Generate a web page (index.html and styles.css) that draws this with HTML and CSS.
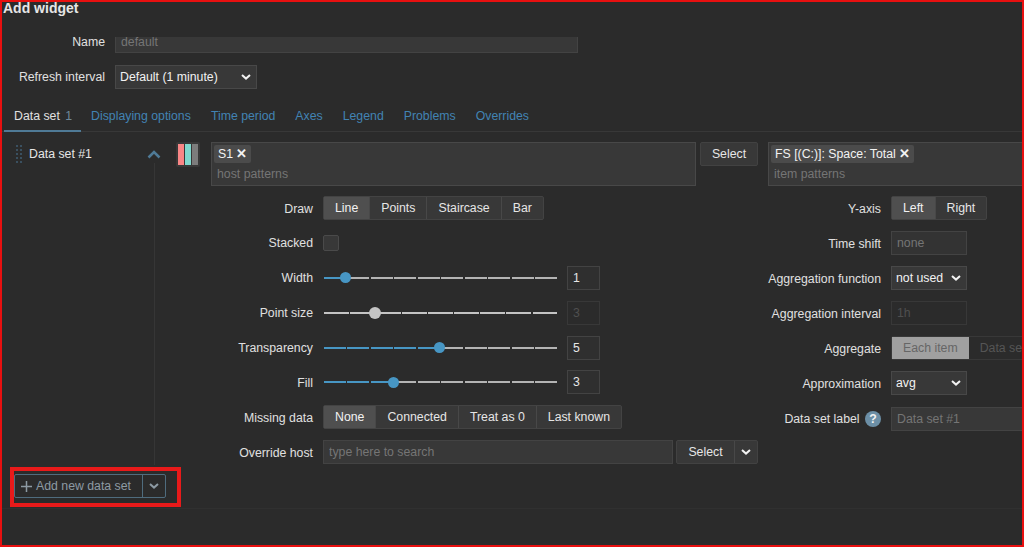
FILE: index.html
```html
<!DOCTYPE html>
<html lang="en">
<head>
    <meta charset="UTF-8">
    <meta name="viewport" content="width=device-width, initial-scale=1.0">
    <title>Add widget</title>
    <link rel="stylesheet" href="styles.css">
</head>
<body>
    <div class="frame">
        <h1 class="title">Add widget</h1>

        <div class="top-row name-row">
            <label class="top-label">Name</label>
            <input class="input name-input" placeholder="default">
        </div>
        <div class="top-row refresh-row">
            <label class="top-label">Refresh interval</label>
            <div class="select refresh-select">
                <span>Default (1 minute)</span>
                <svg class="chev" viewBox="0 0 10 6"><path d="M1 1l4 3.600L9 1"/></svg>
            </div>
        </div>

        <div class="tabs">
            <a class="tab active">Data set <span class="count">1</span></a>
            <a class="tab">Displaying options</a>
            <a class="tab">Time period</a>
            <a class="tab">Axes</a>
            <a class="tab">Legend</a>
            <a class="tab">Problems</a>
            <a class="tab">Overrides</a>
        </div>

        <div class="dataset">
            <div class="ds-head">
                <span class="drag"></span>
                <span class="ds-name">Data set #1</span>
                <svg class="ds-toggle" viewBox="0 0 14 9"><path d="M1.500 7.500L7 2l5.500 5.500"/></svg>
            </div>
            <div class="ds-body">
                <div class="patterns">
                    <div class="swatch"><i class="red"></i><i class="teal"></i><i class="grey"></i></div>
                    <div class="multi host-multi">
                        <span class="chip">S1 <b>&#x2715;</b></span>
                        <span class="hint">host patterns</span>
                    </div>
                    <button class="btn select-btn">Select</button>
                    <div class="multi item-multi">
                        <span class="chip">FS [(C:)]: Space: Total <b>&#x2715;</b></span>
                        <span class="hint">item patterns</span>
                    </div>
                </div>

                <div class="fields">
                    <div class="col col-left">
                        <div class="row">
                            <label>Draw</label>
                            <div class="seg">
                                <span class="on">Line</span><span>Points</span><span>Staircase</span><span>Bar</span>
                            </div>
                        </div>
                        <div class="row">
                            <label>Stacked</label>
                            <span class="checkbox"></span>
                        </div>
                        <div class="row">
                            <label>Width</label>
                            <div class="slider">
                                <i class="on"></i><i></i><i></i><i></i><i></i><i></i><i></i><i></i><i></i><i></i>
                                <span class="thumb" style="left: 9.400%"></span>
                            </div>
                            <input class="input num" value="1">
                        </div>
                        <div class="row">
                            <label>Point size</label>
                            <div class="slider off">
                                <i></i><i></i><i></i><i></i><i></i><i></i><i></i><i></i><i></i>
                                <span class="thumb" style="left: 21.800%"></span>
                            </div>
                            <input class="input num dim" value="3">
                        </div>
                        <div class="row">
                            <label>Transparency</label>
                            <div class="slider">
                                <i class="on"></i><i class="on"></i><i class="on"></i><i class="on"></i><i class="on"></i><i></i><i></i><i></i><i></i><i></i>
                                <span class="thumb" style="left: 49.600%"></span>
                            </div>
                            <input class="input num" value="5">
                        </div>
                        <div class="row">
                            <label>Fill</label>
                            <div class="slider">
                                <i class="on"></i><i class="on"></i><i class="on"></i><i></i><i></i><i></i><i></i><i></i><i></i><i></i>
                                <span class="thumb" style="left: 29.800%"></span>
                            </div>
                            <input class="input num" value="3">
                        </div>
                        <div class="row">
                            <label>Missing data</label>
                            <div class="seg">
                                <span class="on">None</span><span>Connected</span><span>Treat as 0</span><span>Last known</span>
                            </div>
                        </div>
                        <div class="row">
                            <label>Override host</label>
                            <input class="input host-search" placeholder="type here to search">
                            <div class="split">
                                <span class="split-main">Select</span>
                                <span class="split-arrow"><svg class="chev" viewBox="0 0 10 6"><path d="M1 1l4 3.600L9 1"/></svg></span>
                            </div>
                        </div>
                    </div>

                    <div class="col col-right">
                        <div class="row">
                            <label>Y-axis</label>
                            <div class="seg">
                                <span class="on">Left</span><span>Right</span>
                            </div>
                        </div>
                        <div class="row">
                            <label>Time shift</label>
                            <input class="input small" placeholder="none">
                        </div>
                        <div class="row">
                            <label>Aggregation function</label>
                            <div class="select small-select">
                                <span>not used</span>
                                <svg class="chev" viewBox="0 0 10 6"><path d="M1 1l4 3.600L9 1"/></svg>
                            </div>
                        </div>
                        <div class="row">
                            <label>Aggregation interval</label>
                            <input class="input small dim" placeholder="1h">
                        </div>
                        <div class="row">
                            <label>Aggregate</label>
                            <div class="seg seg-off">
                                <span class="on">Each item</span><span>Data set</span>
                            </div>
                        </div>
                        <div class="row">
                            <label>Approximation</label>
                            <div class="select small-select">
                                <span>avg</span>
                                <svg class="chev" viewBox="0 0 10 6"><path d="M1 1l4 3.600L9 1"/></svg>
                            </div>
                        </div>
                        <div class="row">
                            <label>Data set label <span class="help">?</span></label>
                            <input class="input label-input" placeholder="Data set #1">
                        </div>
                    </div>
                </div>
            </div>
        </div>

        <div class="add-row">
            <div class="add-split">
                <span class="add-main">
                    <svg class="plus" viewBox="0 0 11 11"><path d="M5.500 0v11M0 5.500h11"/></svg>
                    Add new data set
                </span>
                <span class="add-arrow"><svg class="chev" viewBox="0 0 10 6"><path d="M1 1l4 3.600L9 1"/></svg></span>
            </div>
        </div>
        <div class="footer-line"></div>

        <div class="highlight"></div>
    </div>
</body>
</html>
```

FILE: styles.css
```css
* {
    box-sizing: border-box;
}
html, body {
    margin: 0;
    height: 100%;
}
body {
    font-family: 'Liberation Sans', Arial, sans-serif;
    font-size: 12.300px;
    color: #f2f2f2;
    background: #2b2b2b;
    overflow: hidden;
}
.frame {
    position: relative;
    width: 1024px;
    height: 547px;
    border: 2px solid #e81010;
    background: #2b2b2b;
    overflow: hidden;
}
.title {
    margin: 0 0 0 1px;
    height: 35px;
    font-size: 14px;
    line-height: 13px;
    font-weight: bold;
    color: #e6e6e6;
}

/* top form */
.top-row {
    display: flex;
    align-items: center;
    gap: 10px;
}
.top-label {
    width: 103px;
    text-align: right;
    color: #e0e0e0;
}
.name-row {
    height: 16px;
    margin-bottom: 12px;
}
.name-row .top-label {
    margin-top: -6px;
}
.refresh-row {
    height: 24px;
    margin-bottom: 12px;
}
.input {
    height: 24px;
    padding: 0 5px;
    font: inherit;
    color: #f2f2f2;
    background: #383838;
    border: 1px solid #434343;
    outline: none;
}
.input::placeholder {
    color: #757575;
}
.name-input {
    width: 463px;
    height: 16px;
    padding-bottom: 6px;
    border-top: none;
}
.select {
    display: flex;
    align-items: center;
    justify-content: space-between;
    height: 24px;
    padding: 0 5px 0 4px;
    background: #383838;
    border: 1px solid #484848;
    color: #f2f2f2;
}
.refresh-select {
    width: 142px;
}
.chev {
    width: 10px;
    height: 6px;
    fill: none;
    stroke: #f2f2f2;
    stroke-width: 2;
}

/* tabs */
.tabs {
    display: flex;
    height: 31px;
    padding-left: 2px;
    border-bottom: 1px solid #383838;
}
.tab {
    padding: 8px 10px 0;
    color: #4283b3;
    white-space: nowrap;
}
.tab.active {
    padding-right: 9px;
    color: #e0e0e0;
    border-bottom: 2px solid #4f7a96;
    height: 31px;
}
.count {
    color: #6f8a9b;
    margin-left: 2px;
}

/* data set */
.dataset {
    display: flex;
    margin-top: 10px;
    height: 323px;
}
.ds-head {
    position: relative;
    width: 175px;
    flex: none;
    display: flex;
    align-items: flex-start;
}
.drag {
    width: 8px;
    height: 20px;
    margin: 2px 0 0 13px;
    background-image: radial-gradient(#3a5060 1px, transparent 1.200px);
    background-size: 4px 4px;
}
.ds-name {
    margin: 5px 0 0 6px;
    color: #e6e6e6;
}
.ds-toggle {
    position: absolute;
    left: 145px;
    top: 8px;
    width: 14px;
    height: 9px;
    fill: none;
    stroke: #4f7a96;
    stroke-width: 2.500;
}
.ds-head::after {
    content: "";
    position: absolute;
    left: 152px;
    top: 21px;
    bottom: 0;
    border-left: 1px solid #363636;
}
.ds-body {
    flex: none;
}
.patterns {
    display: flex;
    align-items: flex-start;
    gap: 4px;
}
.swatch {
    display: flex;
    gap: 1px;
    width: 24px;
    height: 25px;
    padding: 2px;
    margin: 0 7px 0 -1px;
    background: #383838;
    border-radius: 2px;
}
.swatch i {
    flex: 1;
}
.swatch .red {
    background: #f98686;
}
.swatch .teal {
    background: #7fd8ce;
}
.swatch .grey {
    background: #7c7c7c;
}
.multi {
    height: 44px;
    padding: 2px;
    background: #383838;
    border: 1px solid #484848;
}
.host-multi {
    width: 485px;
}
.item-multi {
    width: 300px;
    margin-left: 6px;
}
.chip {
    display: table;
    height: 18px;
    line-height: 18px;
    padding: 0 4px;
    background: #4b4b4b;
    border-radius: 2px;
    color: #f2f2f2;
}
.chip b {
    font-size: 13px;
}
.hint {
    display: block;
    margin: 4px 0 0 3px;
    color: #757575;
}
.btn {
    height: 24px;
    font: inherit;
    color: #e6e6e6;
    background: #383838;
    border: 1px solid #424242;
    border-radius: 2px;
}
.select-btn {
    width: 58px;
}

/* field columns */
.fields {
    display: flex;
    gap: 10px;
    margin-top: 10px;
}
.col {
    display: flex;
    flex-direction: column;
    gap: 10.900px;
    flex: none;
}
.col-left {
    width: 581px;
}
.col-right {
    width: 300px;
    gap: 11.100px;
}
.row {
    display: flex;
    align-items: center;
    gap: 10px;
    height: 24px;
}
.row > label {
    flex: none;
    padding-top: 1px;
    text-align: right;
    color: #e0e0e0;
}
.col-left .row > label {
    width: 136px;
}
.col-right .row > label {
    width: 113px;
}
.seg {
    display: flex;
    flex: none;
    height: 24px;
    border: 1px solid #434343;
    border-radius: 2px;
    background: #383838;
    white-space: nowrap;
}
.seg span {
    padding: 0 11px;
    line-height: 22px;
    color: #e6e6e6;
    border-left: 1px solid #484848;
}
.seg span:first-child {
    border-left: none;
}
.seg span.on {
    background: #4f4f4f;
    color: #f2f2f2;
}
.seg-off {
    background: none;
    border-color: #383838;
}
.seg-off span {
    padding: 0 11px;
    color: #555;
    border-left: none;
}
.seg-off span.on {
    background: #a0a0a0;
    color: #666;
}
.checkbox {
    width: 16px;
    height: 16px;
    background: #383838;
    border: 1px solid #4a4a4a;
    border-radius: 2px;
}
.slider {
    position: relative;
    display: flex;
    gap: 1.500px;
    width: 233px;
    margin: 0 0 0 1px;
    flex: none;
}
.slider i {
    flex: 1;
    height: 2px;
    background: #b4b4b4;
}
.slider i.on {
    background: #4796c4;
}
.thumb {
    position: absolute;
    top: -4.500px;
    width: 11px;
    height: 11px;
    margin-left: -5.500px;
    border-radius: 50%;
    background: #4796c4;
}
.slider.off i {
    background: #c4c4c4;
}
.slider.off .thumb {
    top: -5px;
    width: 12px;
    height: 12px;
    margin-left: -6px;
    background: #c4c4c4;
}
.num {
    width: 33px;
    background: #2f2f2f;
    color: #e6e6e6;
}
.num.dim {
    background: none;
    border-color: #383838;
    color: #4f4f4f;
}
.host-search {
    width: 350px;
    margin-right: -7px;
}
.split {
    display: flex;
    height: 24px;
    background: #383838;
    border: 1px solid #424242;
    border-radius: 2px;
}
.split-main {
    width: 57px;
    text-align: center;
    line-height: 22px;
    color: #e6e6e6;
}
.split-arrow {
    display: flex;
    align-items: center;
    justify-content: center;
    width: 23px;
    border-left: 1px solid #484848;
}
.small {
    width: 76px;
}
.input.small {
    background: #333;
}
.input.small.dim {
    background: none;
    border-color: #383838;
}
.input.small.dim::placeholder {
    color: #4f4f4f;
}
.small-select {
    width: 76px;
}
.help {
    display: inline-block;
    width: 16px;
    height: 16px;
    margin-left: 2px;
    border-radius: 50%;
    background: #6c8fa6;
    color: #f2f2f2;
    font-weight: bold;
    text-align: center;
    line-height: 16px;
}
.label-input {
    width: 200px;
}

/* add button and annotation */
.add-row {
    margin: 9px 0 0 12px;
}
.add-split {
    display: inline-flex;
    height: 24px;
    border: 1px solid #4f6c7e;
    border-radius: 2px;
    color: #8d9aa3;
}
.add-main {
    display: flex;
    align-items: center;
    gap: 4px;
    width: 127px;
    padding-left: 6px;
}
.plus {
    width: 11px;
    height: 11px;
    stroke: #8d9aa3;
    stroke-width: 1.500;
}
.add-arrow {
    display: flex;
    align-items: center;
    justify-content: center;
    width: 23px;
    border-left: 1px solid #4f6c7e;
}
.add-arrow .chev {
    stroke: #8d9aa3;
}
.footer-line {
    margin-top: 10px;
    border-top: 1px solid #303030;
}
.highlight {
    position: absolute;
    left: 8px;
    top: 465px;
    width: 171px;
    height: 40px;
    border: 4px solid #e81a1a;
}
```
